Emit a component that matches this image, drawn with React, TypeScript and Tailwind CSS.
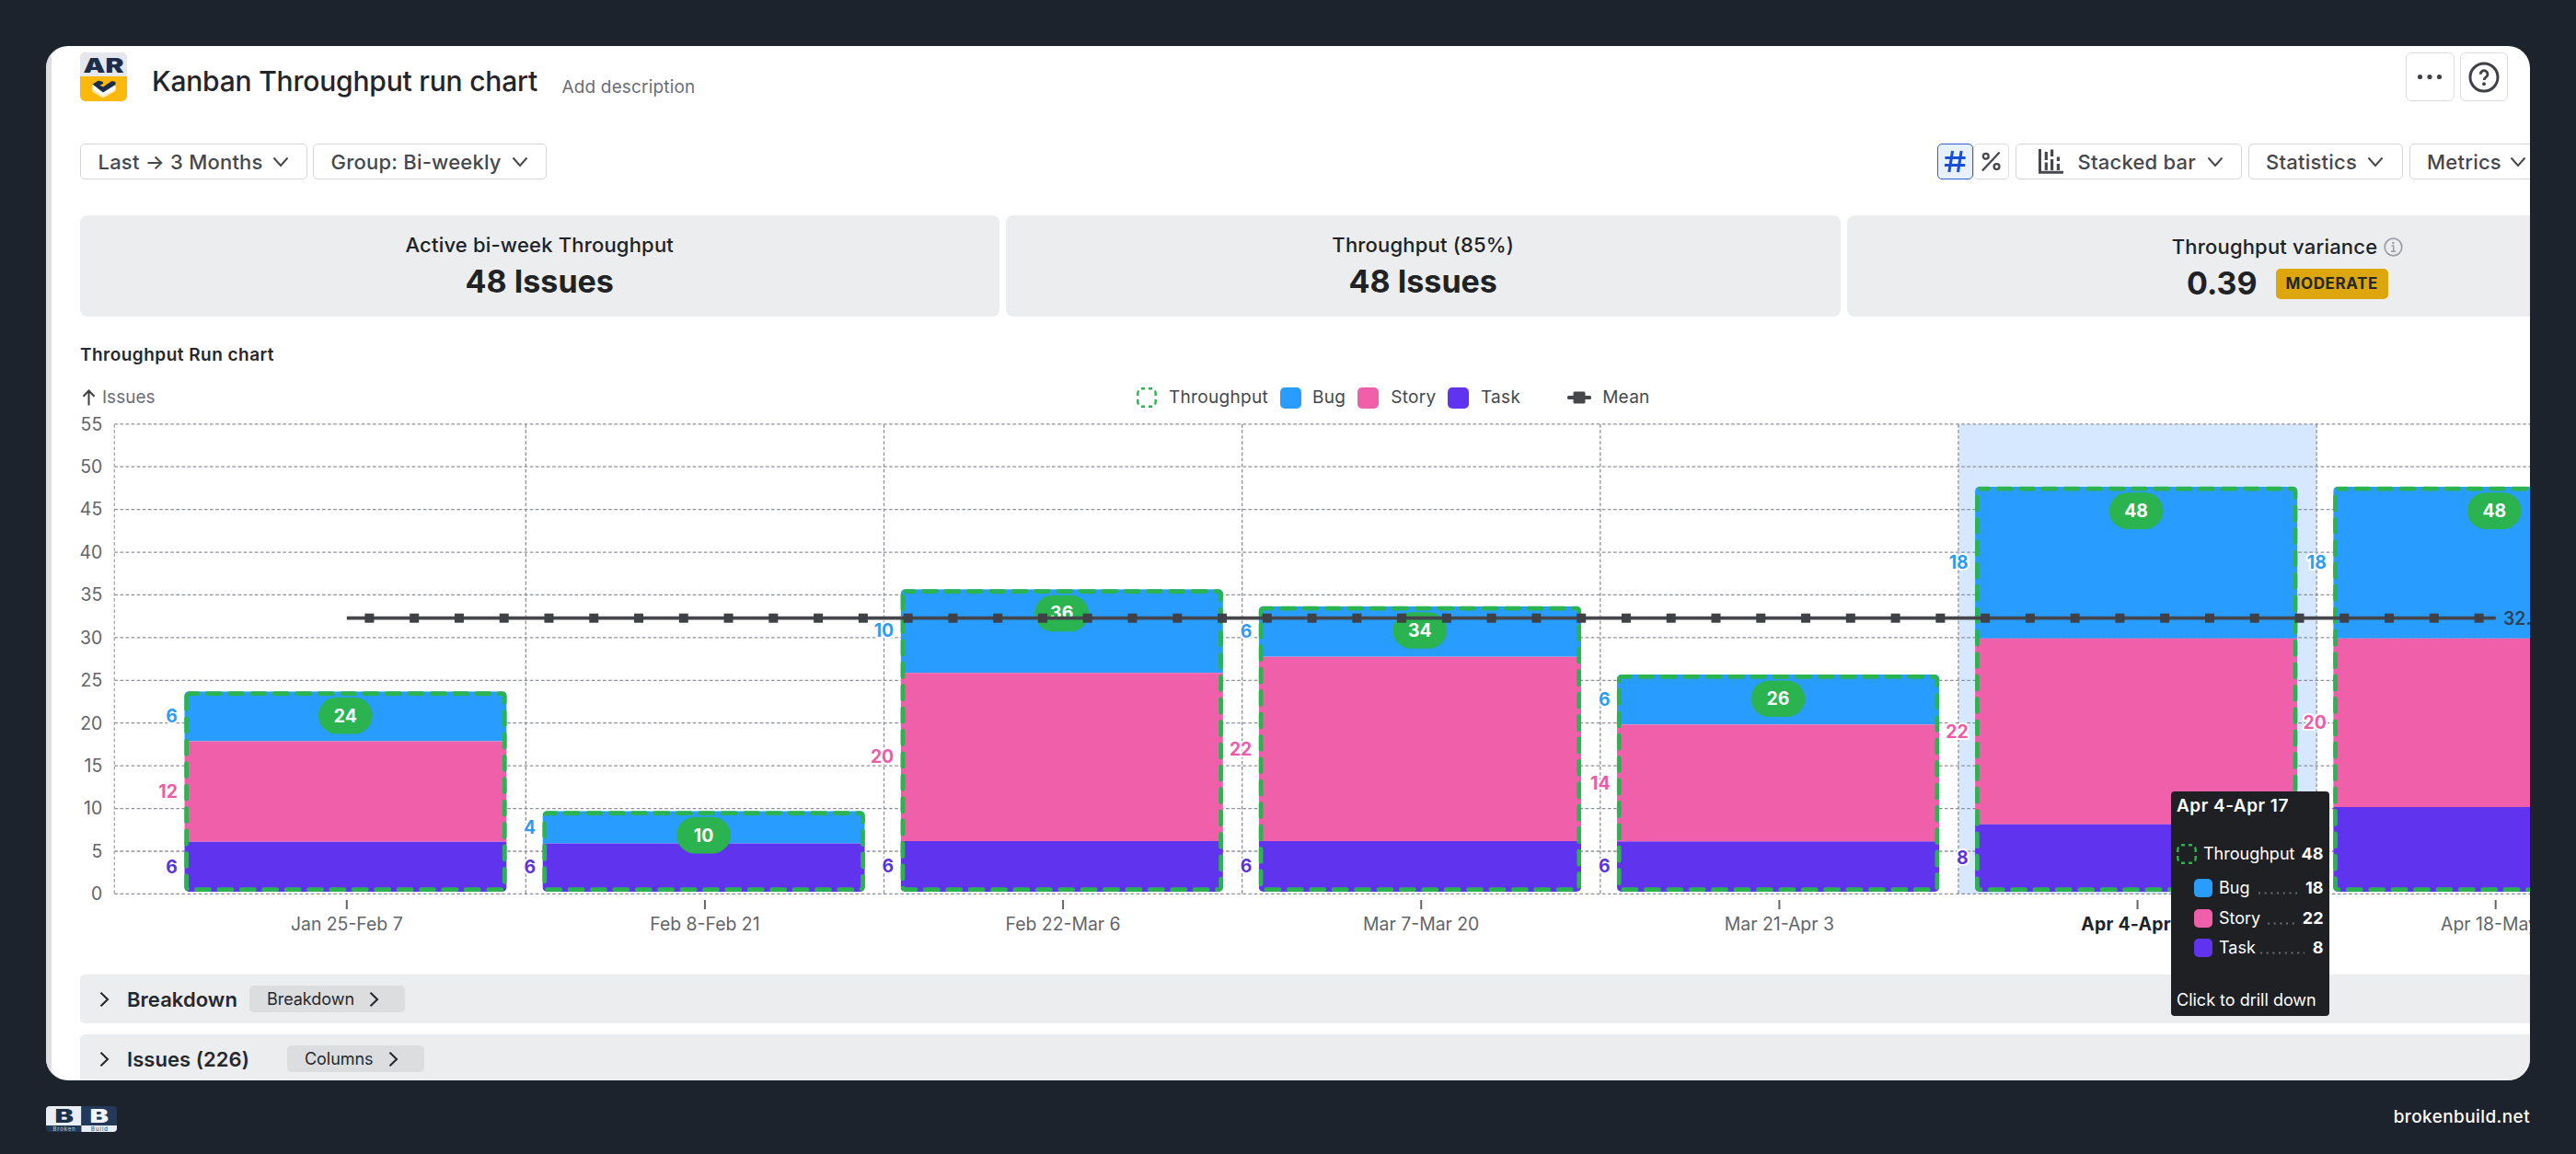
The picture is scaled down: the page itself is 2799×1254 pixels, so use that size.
import React from "react";

type Segment = { label: string; value: number; color: string; text: string; bottom: number };
type Bar = { name: string; total: number; top: number; segments: Segment[]; active?: boolean };

const BUG = { label: "Bug", color: "#289dff", text: "#2f9cf4" };
const STORY = { label: "Story", color: "#f060aa", text: "#ec5ca6" };
const TASK = { label: "Task", color: "#6034ee", text: "#5a35dc" };
const GREEN = "#2ab34f";

const BASE = 969;
const BAND = 389.15;
const FIRST_BAND = 182.2;
const BAR_WIDTH = 350.3;

const bars: Bar[] = [
  { name: "Jan 25-Feb 7", total: 24, top: 751.3, segments: [{ ...BUG, value: 6, bottom: 805.5 }, { ...STORY, value: 12, bottom: 914.7 }, { ...TASK, value: 6, bottom: BASE }] },
  { name: "Feb 8-Feb 21", total: 10, top: 881.3, segments: [{ ...BUG, value: 4, bottom: 916.5 }, { ...TASK, value: 6, bottom: BASE }] },
  { name: "Feb 22-Mar 6", total: 36, top: 640.2, segments: [{ ...BUG, value: 10, bottom: 731.2 }, { ...STORY, value: 20, bottom: 914 }, { ...TASK, value: 6, bottom: BASE }] },
  { name: "Mar 7-Mar 20", total: 34, top: 658.7, segments: [{ ...BUG, value: 6, bottom: 713.7 }, { ...STORY, value: 22, bottom: 914 }, { ...TASK, value: 6, bottom: BASE }] },
  { name: "Mar 21-Apr 3", total: 26, top: 733, segments: [{ ...BUG, value: 6, bottom: 787.3 }, { ...STORY, value: 14, bottom: 914.3 }, { ...TASK, value: 6, bottom: BASE }] },
  { name: "Apr 4-Apr 17", total: 48, top: 528.8, active: true, segments: [{ ...BUG, value: 18, bottom: 693.8 }, { ...STORY, value: 22, bottom: 895.8 }, { ...TASK, value: 8, bottom: BASE }] },
  { name: "Apr 18-May 1", total: 48, top: 528.8, segments: [{ ...BUG, value: 18, bottom: 693.8 }, { ...STORY, value: 20, bottom: 877 }, { ...TASK, value: 10, bottom: BASE }] },
];

function Chevron({ dir = "down", className = "" }: { dir?: "down" | "right"; className?: string }) {
  return dir === "down" ? (
    <svg className={`h-[12px] w-[18px] shrink-0 ${className}`} viewBox="0 0 18 12" fill="none" stroke="currentColor" strokeWidth="2">
      <path d="M1.5 1.5 9 10l7.500-8.500" />
    </svg>
  ) : (
    <svg className={`h-[18px] w-[12px] shrink-0 ${className}`} viewBox="0 0 12 18" fill="none" stroke="currentColor" strokeWidth="2.1">
      <path d="M1.500 1.800 9 9l-7.500 7.200" />
    </svg>
  );
}

function Select({ children, className = "" }: { children: React.ReactNode; className?: string }) {
  return (
    <button className={`flex h-[39px] shrink-0 items-center justify-between rounded-[5px] border-[1.5px] border-[#d5d6d9] bg-white pl-[18.5px] pr-[19.5px] text-[22px] font-medium leading-none tracking-[0.22px] text-[#46484d] ${className}`}>
      {children}
      <Chevron />
    </button>
  );
}

function ProjectLogo() {
  return (
    <svg className="h-[53px] w-[51px] shrink-0" viewBox="0 0 51 53">
      <rect width="51" height="53" rx="6" fill="#fdb90b" />
      <path d="M0 26V6a6 6 0 0 1 6-6h39a6 6 0 0 1 6 6v20z" fill="#e4e7ed" />
      <text x="3.500" y="22" className="text-[21.5px] font-black" textLength="44" lengthAdjust="spacingAndGlyphs" fill="#1c2d49">AR</text>
      <path d="M13.500 38.500 18 36.500 25 42 34 36l4.500 2v4L25 49.500 13.500 43z" fill="#ffe9b0" />
      <path d="M13.500 35.500 17.500 34 25 40l9-6 4.500 2v4L25 47 13.500 40z" fill="#fff" />
      <path d="M13.500 34.500 20 30.500l5 1.500v2l-3.500 1.500 3.500 2L34.500 31l4 1v3L25 43.500z" fill="#1c2d49" />
    </svg>
  );
}

function BrandLogo() {
  return (
    <svg className="h-[28px] w-[77px]" viewBox="0 0 77 28">
      <clipPath id="brand"><rect width="77" height="28" rx="4" /></clipPath>
      <g clipPath="url(#brand)">
        <rect width="38.400" height="21" fill="#e9edf4" />
        <rect x="38.400" width="38.600" height="21" fill="#22395a" />
        <rect y="21" width="38.400" height="7" fill="#22395a" />
        <rect x="38.400" y="21" width="38.600" height="7" fill="#e9edf4" />
        <text x="9.500" y="18" className="text-[20px] font-black" textLength="20.500" lengthAdjust="spacingAndGlyphs" fill="#1c2f4c">B</text>
        <text x="47.500" y="18" className="text-[20px] font-black" textLength="20.500" lengthAdjust="spacingAndGlyphs" fill="#f2f5fa">B</text>
        <text x="7.500" y="26.600" className="text-[6px]" textLength="24" fill="#c5cedb">Broken</text>
        <text x="49" y="26.600" className="text-[6px]" textLength="18" fill="#2b3c57">Build</text>
      </g>
    </svg>
  );
}

function DashedSwatch({ className = "" }: { className?: string }) {
  return (
    <svg className={`h-[22px] w-[22px] shrink-0 ${className}`} viewBox="0 0 22 22" fill="none" stroke={GREEN} strokeWidth="2.400">
      <path d="M5 1.300h4M13 1.300h4M5 20.700h4M13 20.700h4M1.300 9V6.500q0-2 1-3M20.700 9V6.500q0-2-1-3M1.300 13v2.500q0 2 1 3M20.700 13v2.500q0 2-1 3" />
    </svg>
  );
}

function Header() {
  return (
    <header className="flex h-[106px] w-[2638px] items-start pt-[7px]">
      <ProjectLogo />
      <h1 className="ml-[27px] mt-[13px] text-[30px] font-medium leading-[36px] tracking-[-0.2px] text-[#232529]">Kanban Throughput run chart</h1>
      <span className="ml-[26.5px] mt-[26px] text-[19px] leading-[24px] tracking-[0.17px] text-[#6b6e76]">Add description</span>
      <div className="ml-auto flex gap-[6px] text-[#3f4146]">
        <button className="flex h-[53px] w-[52.5px] items-center justify-center rounded-[6px] border-[1.5px] border-[#dcdde0]">
          <svg className="h-[8px] w-[30px]" viewBox="0 0 30 8" fill="currentColor">
            <circle cx="4.500" cy="3.500" r="2.600" /><circle cx="15" cy="3.500" r="2.600" /><circle cx="25.500" cy="3.500" r="2.600" />
          </svg>
        </button>
        <button className="flex h-[53px] w-[52.5px] items-center justify-center rounded-[6px] border-[1.5px] border-[#dcdde0]">
          <svg className="size-[34px]" viewBox="0 0 34 34" fill="none" stroke="currentColor" strokeWidth="3">
            <circle cx="17" cy="17" r="15" />
            <path d="M13.200 13.700a3.900 3.900 0 1 1 6 3.200c-1.400.9-2.100 1.600-2.100 3" strokeWidth="2.800" />
            <circle cx="17" cy="24.200" r="1.900" fill="currentColor" stroke="none" />
          </svg>
        </button>
      </div>
    </header>
  );
}

function Toolbar() {
  return (
    <div className="flex h-[39px] items-center">
      <Select className="w-[247px]">Last → 3 Months</Select>
      <Select className="ml-[6px] w-[254px]">Group: Bi-weekly</Select>
      <div className="ml-[1511px] flex shrink-0">
        <button className="flex h-[39px] w-[39px] items-center justify-center rounded-[5px] border-[1.5px] border-[#2e62d6] bg-[#e7f1fe] text-[#1650d6]">
          <svg className="size-[25px]" viewBox="0 0 27 27" fill="none" stroke="currentColor" strokeWidth="3.300">
            <path d="M1.500 9.200h24M1 17.800h24M10.300 1 6.300 26M20.700 1l-4 25" />
          </svg>
        </button>
        <button className="flex h-[39px] w-[39px] items-center justify-center rounded-[5px] border-[1.5px] border-[#dcdde0] text-[#46484d]">
          <svg className="size-[23px]" viewBox="0 0 24 24" fill="none" stroke="currentColor" strokeWidth="2.400">
            <circle cx="6" cy="6" r="3.100" /><circle cx="18.300" cy="17.800" r="3.100" /><path d="M21.500 1.500 2 22.500" />
          </svg>
        </button>
      </div>
      <Select className="ml-[7px] w-[246px] pl-[23px]">
        <svg className="h-[27px] w-[28px]" viewBox="0 0 28 27" fill="none" stroke="currentColor" strokeWidth="3">
          <path d="M2.500 0v25.200H28" />
          <path d="M9.300 3v9M9.300 14.500V23M15.600.5v7.500M15.600 11V23M22.400 8.500v4.500M22.400 16V23" strokeWidth="3.200" />
        </svg>
        <span className="ml-[4px]">Stacked bar</span>
      </Select>
      <Select className="ml-[6.5px] w-[168px]">Statistics</Select>
      <Select className="ml-[7px] w-[148px]">Metrics</Select>
    </div>
  );
}

function Metric({ title, children, className }: { title: React.ReactNode; children: React.ReactNode; className: string }) {
  return (
    <div className={`flex h-[110px] shrink-0 flex-col items-center rounded-[8px] bg-[#ebedee] text-[#202226] ${className}`}>
      <div className="flex items-center text-[22px] font-medium leading-[28px] tracking-[0.19px]">{title}</div>
      <div className="flex h-[40px] items-center text-[34px] font-bold leading-[40px]">{children}</div>
    </div>
  );
}

function Metrics() {
  return (
    <div className="mt-[39px] flex gap-[7px]">
      <Metric className="w-[998.5px] gap-[6px] pt-[18px]" title="Active bi-week Throughput">48 Issues</Metric>
      <Metric className="w-[907.5px] gap-[6px] pt-[18px]" title="Throughput (85%)">48 Issues</Metric>
      <Metric
        className="w-[957px] gap-[6px] pt-[20px]"
        title={
          <>
            Throughput variance
            <svg className="ml-[7px] size-[21px] text-[#9a9da5]" viewBox="0 0 21 21" fill="none" stroke="currentColor" strokeWidth="1.700">
              <circle cx="10.500" cy="10.500" r="9.300" />
              <path d="M8.500 9h2.200v6M8 15.300h5.200" strokeWidth="1.500" />
              <circle cx="10.400" cy="6" r="1.200" fill="currentColor" stroke="none" />
            </svg>
          </>
        }
      >
        0.39
        <span className="ml-[20px] flex h-[33px] items-center rounded-[5px] bg-[#dca60c] px-[11px] text-[17px] font-bold leading-none tracking-[0.6px] text-[#24262a]">MODERATE</span>
      </Metric>
    </div>
  );
}

function Legend() {
  return (
    <div className="mt-[22px] flex h-[24px] items-center text-[19px] leading-[24px] tracking-[0.3px] text-[#46484d]">
      <svg className="ml-[2px] h-[18px] w-[15px] shrink-0" viewBox="0 0 15 18" fill="none" stroke="#3c3e43" strokeWidth="2">
        <path d="M7.500 17.500V1.500M1.500 7.800l6-6.300 6 6.300" />
      </svg>
      <span className="ml-[7px] w-[1122px] tracking-[0px] text-[#6b6e76]">Issues</span>
      <DashedSwatch className="ml-[2px]" />
      <span className="ml-[13px]">Throughput</span>
      <i className="ml-[13px] size-[23px] rounded-[5px] bg-[#289dff]" />
      <span className="ml-[12px]">Bug</span>
      <i className="ml-[13px] size-[23px] rounded-[5px] bg-[#f060aa]" />
      <span className="ml-[13px]">Story</span>
      <i className="ml-[12.500px] size-[23px] rounded-[5px] bg-[#6034ee]" />
      <span className="ml-[13px]">Task</span>
      <svg className="ml-[51px] h-[14px] w-[26px]" viewBox="0 0 26 14" fill="#46484d">
        <rect y="5" width="26" height="4" rx="1.500" /><rect x="6.500" y="0.500" width="13" height="13" rx="1.500" />
      </svg>
      <span className="ml-[12px]">Mean</span>
    </div>
  );
}

function ThroughputChart() {
  const meanY = 671.7;
  return (
    <svg className="block h-[615px] w-[2662px]" viewBox="87 444 2662 615">
      <rect x={2128.3} y={461} width={389} height={510.500} fill="#d6e8ff" />
      <g stroke="#8d9199" strokeWidth="1.300" strokeDasharray="3.660 2.440">
        {Array.from({ length: 12 }, (_, i) => (
          <line key={i} x1={124.3} x2={2749} y1={971.4 - i * 46.42} y2={971.4 - i * 46.42} />
        ))}
        <line x1={124.3} x2={124.3} y1={461} y2={971.5} stroke="#a4a7ad" />
        {[1, 2, 3, 4, 5, 6].map((i) => (
          <line key={i} x1={FIRST_BAND + BAND * i} x2={FIRST_BAND + BAND * i} y1={461} y2={971.5} />
        ))}
      </g>
      <g className="text-[19.4px]" fill="#626569" textAnchor="end">
        {Array.from({ length: 12 }, (_, i) => (
          <text key={i} x={111.2} y={978.2 - i * 46.42}>{i * 5}</text>
        ))}
      </g>
      {bars.map((bar, i) => {
        const x = FIRST_BAND + BAND * i + 18.1;
        const center = FIRST_BAND + BAND * i + BAND / 2;
        const l = x + 2.35;
        const r = x + BAR_WIDTH - 2.35;
        const t = bar.top + 2.35;
        const b = BASE - 2.35;
        return (
          <g key={bar.name}>
            <clipPath id={`bar-${i}`}>
              <rect x={x} y={bar.top} width={BAR_WIDTH} height={BASE - bar.top} rx="5" />
            </clipPath>
            <g clipPath={`url(#bar-${i})`}>
              {bar.segments.map((s, j) => {
                const top = j === 0 ? bar.top : bar.segments[j - 1].bottom;
                return <rect key={s.label} x={x} y={top} width={BAR_WIDTH} height={s.bottom - top} fill={s.color} />;
              })}
            </g>
            <path
              d={`M${l + 3} ${t}H${r - 3}a3 3 0 0 1 3 3V${b - 3}a3 3 0 0 1 -3 3H${l + 3}a3 3 0 0 1 -3 -3V${t + 3}a3 3 0 0 1 3 -3`}
              fill="none"
              stroke={GREEN}
              strokeWidth="4.700"
              strokeLinecap="round"
              strokeDasharray="14.200 10.200"
              strokeDashoffset="5"
            />
            <rect x={center - 30.800} y={bar.top + 6.500} width="58.800" height="39.600" rx="19.800" fill={GREEN} />
            <text x={center - 1.4} y={bar.top + 33.200} textAnchor="middle" fill="#fff" className="text-[19.4px] font-bold">{bar.total}</text>
            {bar.segments.map((s, j) => {
              const top = j === 0 ? bar.top : bar.segments[j - 1].bottom;
              return (
                <text
                  key={s.label}
                  x={x - 7.4}
                  y={(top + s.bottom) / 2 + 6.7}
                  textAnchor="end"
                  fill={s.text}
                  stroke="#fff"
                  strokeWidth="4"
                  strokeLinejoin="round"
                  paintOrder="stroke"
                  className="text-[19.4px] font-bold"
                >
                  {s.value}
                </text>
              );
            })}
            <line x1={center} x2={center} y1={978} y2={988} stroke="#626569" strokeWidth="2" />
            <text x={center} y={1011.4} textAnchor="middle" fill={bar.active ? "#202226" : "#626569"} className={bar.active ? "text-[19.4px] font-bold tracking-[0.25px]" : "text-[19.4px]"}>
              {bar.name}
            </text>
          </g>
        );
      })}
      <line x1={376.8} x2={2711.8} y1={meanY} y2={meanY} stroke="#44464b" strokeWidth="3.700" />
      {Array.from({ length: 48 }, (_, k) => (
        <rect key={k} x={396.4 + 48.77 * k} y={meanY - 5} width="10" height="10" fill="#3f4146" />
      ))}
      <text x={2720} y={679} fill="#2b4257" className="text-[19.4px] font-semibold">32.3</text>
    </svg>
  );
}

function Panel({ title, action, className, pillClass }: { title: string; action: string; className: string; pillClass: string }) {
  return (
    <div className={`flex h-[53px] w-[2700px] shrink-0 items-center rounded-[5px] bg-[#ebedee] pl-[21px] text-[#26282c] ${className}`}>
      <Chevron dir="right" />
      <span className="ml-[18px] w-[133px] whitespace-nowrap text-[22px] font-semibold leading-[28px] tracking-[0.06px]">{title}</span>
      <span className={`flex h-[29px] items-center rounded-[5px] bg-[#dcdddf] pl-[19px] text-[18px] leading-none tracking-[-0.04px] ${pillClass}`}>
        {action}
        <Chevron dir="right" className="ml-[16px]" />
      </span>
    </div>
  );
}

function TooltipRow({ swatch, label, value, dots }: { swatch: string; label: string; value: number; dots: string }) {
  return (
    <div className="flex h-[32.4px] items-center pl-[19px]">
      <i className={`size-[20px] rounded-[5px] ${swatch}`} />
      <span className="ml-[7px]">{label}</span>
      <svg className={`ml-auto mr-[9px] mt-[11px] h-[3px] ${dots}`}>
        <line x1="1" x2="100%" y1="1.500" y2="1.500" stroke="#6b6e76" strokeWidth="2" strokeDasharray="2 4.700" />
      </svg>
      <b className="font-bold">{value}</b>
    </div>
  );
}

function Tooltip() {
  return (
    <div className="absolute left-[2302.5px] top-[810px] h-[244px] w-[172.5px] rounded-[4px] bg-[#1f2024] px-[6.5px] pt-[4px] text-[18px] leading-[24px] text-white">
      <div className="text-[19px] font-semibold tracking-[0.5px]">Apr 4-Apr 17</div>
      <div className="mt-[28px] flex h-[24px] items-center">
        <DashedSwatch />
        <span className="ml-[7px]">Throughput</span>
        <b className="ml-auto font-bold">48</b>
      </div>
      <div className="mt-[9px]">
        <TooltipRow swatch="bg-[#289dff]" label="Bug" value={18} dots="w-[43px]" />
        <TooltipRow swatch="bg-[#f060aa]" label="Story" value={22} dots="w-[30px]" />
        <TooltipRow swatch="bg-[#6034ee]" label="Task" value={8} dots="w-[49px]" />
      </div>
      <div className="mt-[28.500px]">Click to drill down</div>
    </div>
  );
}

export default function App() {
  return (
    <div className="flex h-[1254px] w-[2799px] flex-col overflow-hidden whitespace-nowrap bg-[#1c232c] px-[50px] pt-[50px] font-['Inter',sans-serif]">
      <main className="h-[1124px] w-[2699px] shrink-0 overflow-hidden rounded-[24px] bg-white">
        <div className="relative h-[1124px] border-l-[6px] border-[#dedede] pl-[31px]">
          <Header />
          <Toolbar />
          <Metrics />
          <h2 className="mt-[30px] text-[19px] font-semibold leading-[24px] tracking-[0.47px] text-[#26282c]">Throughput Run chart</h2>
          <Legend />
          <ThroughputChart />
          <Panel title="Breakdown" action="Breakdown" className="" pillClass="w-[169px]" />
          <Panel title="Issues (226)" action="Columns" className="mt-[12px]" pillClass="ml-[41px] w-[149px]" />
          <Tooltip />
        </div>
      </main>
      <footer className="flex items-start justify-between pt-[28px]">
        <BrandLogo />
        <span className="text-[19px] font-medium leading-[24px] tracking-[0.4px] text-white">brokenbuild.net</span>
      </footer>
    </div>
  );
}
